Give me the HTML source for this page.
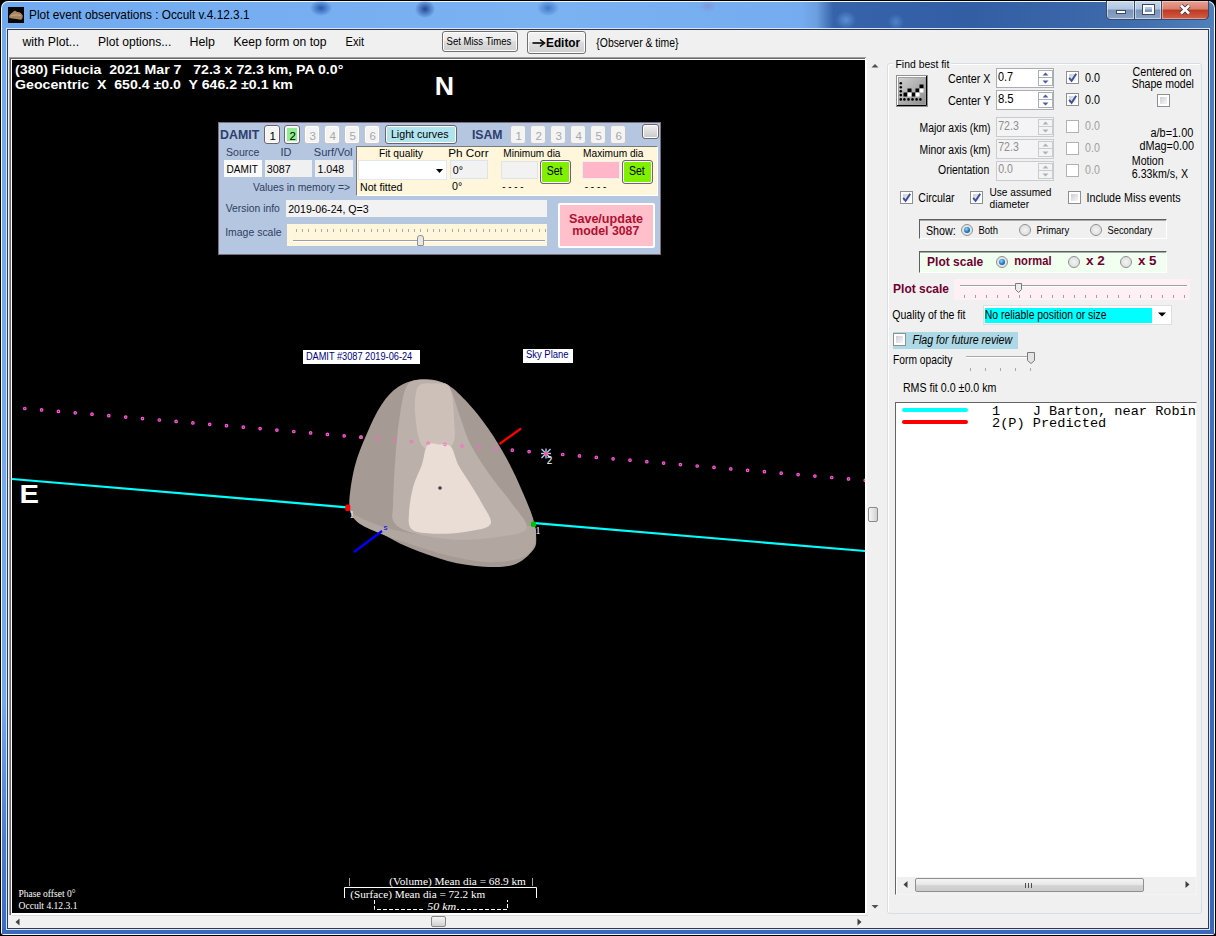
<!DOCTYPE html>
<html><head><meta charset="utf-8"><style>
*{box-sizing:border-box;margin:0;padding:0}
html,body{width:1216px;height:936px;overflow:hidden;background:#000;font-family:"Liberation Sans",sans-serif;font-size:12px;color:#000;position:relative}
.a{position:absolute}
.btn{position:absolute;border:1px solid #707070;border-radius:3px;background:linear-gradient(180deg,#f2f2f2 0,#ebebeb 45%,#dddddd 50%,#cfcfcf 100%);box-shadow:inset 0 0 0 1px #fcfcfc}
.cb{position:absolute;width:13px;height:13px;border:1px solid #8e8f8f;background:#fff}
.cb i{position:absolute;left:2px;top:2px;width:7px;height:7px;background:linear-gradient(135deg,#cbcfd5,#f6f6f6)}
.cbd{position:absolute;width:13px;height:13px;border:1px solid #b1b1b1;background:#fff}
.rb{position:absolute;width:12px;height:12px;border-radius:50%;border:1px solid #8e8f8f;background:radial-gradient(circle at 50% 50%,#f4f4f4 0,#e2e2e2 60%,#f8f8f8 100%)}
.tb{position:absolute;border:1px solid #abadb3;background:#fff}
.tbd{position:absolute;border:1px solid #c8cbd0;background:#f4f4f4}
</style></head><body>
<div class="a" style="left:0px;top:0px;width:1216px;height:936px;background:#000"></div>
<div class="a" style="left:1px;top:1px;width:1214px;height:934px;border-radius:7px 7px 3px 3px;background:#f4f8fc"></div>
<div class="a" style="left:2px;top:2px;width:1212px;height:932px;border-radius:6px 6px 2px 2px;background:linear-gradient(90deg,#72aaf0 0,#7ab2f2 45%,#74acef 66%,#6c9fe0 67.2%,#3663aa 68.6%,#325ea4 80%,#3d6aaa 92%,#5080bc 100%)"></div>
<div class="a" style="left:2px;top:700px;width:6px;height:234px;background:linear-gradient(180deg,rgba(80,130,215,0),#4a7cd0 60%,#3b6cc4)"></div>
<div class="a" style="left:1208px;top:200px;width:6px;height:734px;background:linear-gradient(180deg,rgba(60,100,180,0),#3d6cc0 40%,#3a66b8)"></div>
<div class="a" style="left:2px;top:928px;width:1212px;height:6px;background:#3b68bc;border-radius:0 0 2px 2px"></div>
<div class="a" style="left:310px;top:0px;width:22px;height:16px;border-radius:50%;background:radial-gradient(ellipse at center,rgba(25,75,160,.85) 0,rgba(0,0,0,0) 72%)"></div>
<div class="a" style="left:415px;top:0px;width:20px;height:18px;border-radius:50%;background:radial-gradient(ellipse at center,rgba(20,55,130,.85) 0,rgba(0,0,0,0) 72%)"></div>
<div class="a" style="left:537px;top:0px;width:22px;height:16px;border-radius:50%;background:radial-gradient(ellipse at center,rgba(40,95,180,.7) 0,rgba(0,0,0,0) 72%)"></div>
<div class="a" style="left:700px;top:0px;width:16px;height:12px;border-radius:50%;background:radial-gradient(ellipse at center,rgba(150,100,170,.3) 0,rgba(0,0,0,0) 72%)"></div>
<div class="a" style="left:836px;top:11px;width:20px;height:18px;border-radius:50%;background:radial-gradient(ellipse at center,rgba(120,180,245,.55) 0,rgba(0,0,0,0) 72%)"></div>
<div class="a" style="left:888px;top:14px;width:16px;height:16px;border-radius:50%;background:radial-gradient(ellipse at center,rgba(120,180,245,.4) 0,rgba(0,0,0,0) 72%)"></div>
<div class="a" style="left:7px;top:29px;width:1202px;height:900px;border:1px solid #2b3b55;background:#f0f0f0"></div>
<div class="a" style="left:6px;top:28px;width:1204px;height:902px;border:1px solid #d8e6f8;background:transparent"></div>
<div class="a" style="left:8px;top:30px;width:1200px;height:898px;background:#f0f0f0"></div>
<svg class="a" style="left:8px;top:7px" width="16" height="16"><rect width="16" height="16" fill="#060606"/><path d="M1,10 C1,7.5 3.5,6 5.5,4.5 C6.5,3 8,4 9,5 C11,4.5 13,5.5 14.5,8 C15.2,10 14.2,12.8 12.5,12.8 C10,12.2 7,11.8 4,11.5 C2,11.3 1,11 1,10 Z" fill="#a48462"/><path d="M3,9 C5,8 9,7.5 13,8.5" stroke="#c8a478" stroke-width="1.2" fill="none"/></svg>
<div class="a" style="left:1106px;top:1px;width:103px;height:19px;border:1px solid #3a4a6a;border-top:none;border-radius:0 0 5px 5px;overflow:hidden;background:#000">
<div class="a" style="left:0;top:0;width:28px;height:18px;background:linear-gradient(180deg,#c8d8ec 0,#aec4e0 45%,#7a94b8 50%,#8aa4c8 100%);border-right:1px solid #3a4a6a;box-shadow:inset 0 0 0 1px rgba(255,255,255,.5)"></div>
<div class="a" style="left:28px;top:0;width:27px;height:18px;background:linear-gradient(180deg,#c8d8ec 0,#aec4e0 45%,#7a94b8 50%,#8aa4c8 100%);border-right:1px solid #3a4a6a;box-shadow:inset 0 0 0 1px rgba(255,255,255,.5)"></div>
<div class="a" style="left:55px;top:0;width:47px;height:18px;background:linear-gradient(180deg,#e8a090 0,#d88070 45%,#c03820 50%,#d06048 100%);box-shadow:inset 0 0 0 1px rgba(255,255,255,.4)"></div>
</div>
<div class="a" style="left:1116px;top:10px;width:10px;height:4px;background:#fff;border:1px solid #404860"></div>
<div class="a" style="left:1143px;top:5px;width:11px;height:9px;border:2px solid #fff;outline:1px solid #404860;background:transparent"></div>
<svg class="a" style="left:1177px;top:3px" width="16" height="14"><path d="M4,2.5 L12,10.5 M12,2.5 L4,10.5" stroke="#303848" stroke-width="4.4"/><path d="M4,2.5 L12,10.5 M12,2.5 L4,10.5" stroke="#fff" stroke-width="2.7"/></svg>
<div class="btn" style="left:442px;top:31px;width:76px;height:21px"></div>
<div class="btn" style="left:527px;top:31px;width:59px;height:23px"></div>
<svg class="a" style="left:532px;top:38px" width="14" height="10"><path d="M0.5,5 L11,5" stroke="#000" stroke-width="1.6"/><path d="M8,1.5 L12.5,5 L8,8.5" stroke="#000" stroke-width="1.5" fill="none"/></svg>
<div class="a" style="left:9px;top:57px;width:857px;height:858px;background:#fff;border-top:1px solid #a0a0a0;border-left:1px solid #a0a0a0"></div>
<div class="a" style="left:10px;top:58px;width:855px;height:857px;background:#fff;border-top:1px solid #696969;border-left:1px solid #696969"></div>
<div class="a" style="left:12px;top:60px;width:853px;height:853px;background:#000"></div>
<div class="a" style="left:866px;top:60px;width:16px;height:853px;background:#f0f0f0;border-left:1px solid #fff"></div>
<div class="a" style="left:12px;top:915px;width:856px;height:13px;background:#f0f0f0;border-top:1px solid #dadada"></div>
<svg class="a" style="left:870px;top:62px" width="10" height="8"><path d="M1.5,5.5 L5,2 L8.5,5.5 Z" fill="#505050"/></svg>
<svg class="a" style="left:870px;top:903px" width="10" height="8"><path d="M1.5,2 L5,5.5 L8.5,2 Z" fill="#505050"/></svg>
<svg class="a" style="left:14px;top:918px" width="8" height="10"><path d="M5.5,0.5 L1.5,4 L5.5,7.5 Z" fill="#404040"/></svg>
<svg class="a" style="left:856px;top:918px" width="8" height="10"><path d="M1.5,0.5 L5.5,4 L1.5,7.5 Z" fill="#404040"/></svg>
<div class="a" style="left:868px;top:507px;width:10px;height:15px;border:1px solid #8a8a8a;border-radius:2px;background:linear-gradient(90deg,#f4f4f4 0,#e4e4e4 50%,#d0d0d0 100%)"></div>
<div class="a" style="left:431px;top:916px;width:15px;height:11px;border:1px solid #8a8a8a;border-radius:2px;background:linear-gradient(180deg,#f4f4f4 0,#e4e4e4 50%,#d0d0d0 100%)"></div>
<svg class="a" style="left:0;top:0" width="1216" height="936" viewBox="0 0 1216 936">
<defs><clipPath id="pc"><rect x="12" y="60" width="853" height="853"/></clipPath></defs>
<g clip-path="url(#pc)">
<line x1="12" y1="479" x2="347" y2="507.3" stroke="#00ffff" stroke-width="2.2"/>
<line x1="535" y1="523.2" x2="866" y2="551.1" stroke="#00ffff" stroke-width="2.2"/>
<g fill="#702050" stroke="#ff55dd" stroke-width="1.2"><circle cx="24.8" cy="408.5" r="1.25"/><circle cx="41.6" cy="409.9" r="1.25"/><circle cx="58.4" cy="411.4" r="1.25"/><circle cx="75.2" cy="412.8" r="1.25"/><circle cx="92.0" cy="414.2" r="1.25"/><circle cx="108.8" cy="415.7" r="1.25"/><circle cx="125.7" cy="417.1" r="1.25"/><circle cx="142.5" cy="418.6" r="1.25"/><circle cx="159.3" cy="420.0" r="1.25"/><circle cx="176.1" cy="421.4" r="1.25"/><circle cx="192.9" cy="422.9" r="1.25"/><circle cx="209.7" cy="424.3" r="1.25"/><circle cx="226.5" cy="425.7" r="1.25"/><circle cx="243.3" cy="427.2" r="1.25"/><circle cx="260.1" cy="428.6" r="1.25"/><circle cx="276.9" cy="430.1" r="1.25"/><circle cx="293.8" cy="431.5" r="1.25"/><circle cx="310.6" cy="432.9" r="1.25"/><circle cx="327.4" cy="434.4" r="1.25"/><circle cx="344.2" cy="435.8" r="1.25"/><circle cx="361.0" cy="437.2" r="1.25"/><circle cx="377.8" cy="438.7" r="1.25"/><circle cx="394.6" cy="440.1" r="1.25"/><circle cx="411.4" cy="441.6" r="1.25"/><circle cx="428.2" cy="443.0" r="1.25"/><circle cx="445.0" cy="444.4" r="1.25"/><circle cx="461.9" cy="445.9" r="1.25"/><circle cx="478.7" cy="447.3" r="1.25"/><circle cx="495.5" cy="448.7" r="1.25"/><circle cx="512.3" cy="450.2" r="1.25"/><circle cx="529.1" cy="451.6" r="1.25"/><circle cx="562.7" cy="454.5" r="1.25"/><circle cx="579.5" cy="455.9" r="1.25"/><circle cx="596.3" cy="457.4" r="1.25"/><circle cx="613.1" cy="458.8" r="1.25"/><circle cx="630.0" cy="460.2" r="1.25"/><circle cx="646.8" cy="461.7" r="1.25"/><circle cx="663.6" cy="463.1" r="1.25"/><circle cx="680.4" cy="464.6" r="1.25"/><circle cx="697.2" cy="466.0" r="1.25"/><circle cx="714.0" cy="467.4" r="1.25"/><circle cx="730.8" cy="468.9" r="1.25"/><circle cx="747.6" cy="470.3" r="1.25"/><circle cx="764.4" cy="471.7" r="1.25"/><circle cx="781.2" cy="473.2" r="1.25"/><circle cx="798.1" cy="474.6" r="1.25"/><circle cx="814.9" cy="476.1" r="1.25"/><circle cx="831.7" cy="477.5" r="1.25"/><circle cx="848.5" cy="478.9" r="1.25"/><circle cx="865.3" cy="480.4" r="1.25"/></g>
<path d="M421.9,379.3 C414.1,379.8 405.2,382.5 398.4,386.8 C391.7,391.0 386.7,396.9 381.3,404.9 C376.0,412.9 370.8,424.5 366.4,434.8 C361.9,445.2 357.5,455.5 354.6,466.9 C351.8,478.3 349.3,494.8 349.3,503.2 C349.3,511.6 350.0,512.5 354.6,517.1 C359.2,521.7 368.0,525.9 377.1,531.0 C386.1,536.1 397.4,542.7 409.1,547.6 C420.9,552.6 435.1,557.7 447.6,560.9 C460.0,564.1 472.8,566.0 483.9,566.7 C494.9,567.3 505.6,567.5 513.8,564.7 C522.0,562.0 529.3,554.8 533.0,550.2 C536.8,545.7 536.2,542.7 536.2,537.4 C536.2,532.1 535.4,526.0 533.0,518.2 C530.6,510.3 526.3,500.4 521.9,490.4 C517.5,480.4 512.2,468.7 506.5,458.3 C500.9,448.0 495.0,438.0 488.2,428.4 C481.4,418.8 472.8,408.1 465.7,400.6 C458.6,393.2 452.7,387.1 445.4,383.5 C438.1,380.0 429.8,378.7 421.9,379.3 Z" fill="#a69a94"/>
<path d="M352.0,514.0 C353.7,513.7 362.8,519.3 370.0,522.0 C377.2,524.7 385.0,527.7 395.0,530.0 C405.0,532.3 417.5,534.8 430.0,536.0 C442.5,537.2 457.5,537.3 470.0,537.0 C482.5,536.7 494.5,535.8 505.0,534.0 C515.5,532.2 528.0,524.7 533.0,526.0 C538.0,527.3 535.7,537.5 535.0,542.0 C534.3,546.5 532.5,550.0 529.0,553.0 C525.5,556.0 521.2,558.5 514.0,560.0 C506.8,561.5 496.7,562.7 486.0,562.0 C475.3,561.3 461.7,558.7 450.0,556.0 C438.3,553.3 427.0,549.5 416.0,546.0 C405.0,542.5 393.3,538.7 384.0,535.0 C374.7,531.3 365.3,527.5 360.0,524.0 C354.7,520.5 350.3,514.3 352.0,514.0 Z" fill="#b2a6a0"/>
<path d="M407.0,385.7 C403.2,392.0 401.4,405.3 399.5,417.7 C397.5,430.2 396.3,446.2 395.2,460.5 C394.1,474.7 393.3,492.9 393.1,503.2 C392.9,513.5 390.8,517.5 394.1,522.4 C397.5,527.4 403.8,530.3 413.4,533.1 C423.0,536.0 438.3,538.8 451.8,539.5 C465.4,540.2 482.1,539.2 494.6,537.4 C507.0,535.6 523.8,534.5 526.6,528.8 C529.5,523.1 517.7,512.1 511.7,503.2 C505.6,494.3 497.1,485.0 490.3,475.4 C483.5,465.8 476.1,455.1 471.1,445.5 C466.1,435.9 463.6,426.6 460.4,417.7 C457.2,408.8 454.3,397.8 451.8,392.1 C449.3,386.4 450.4,385.6 445.4,383.5 C440.4,381.5 428.3,379.3 421.9,379.7 C415.5,380.1 410.7,379.3 407.0,385.7 Z" fill="#bcb0aa"/>
<path d="M417.6,387.4 C414.4,393.1 414.4,407.7 415.5,417.7 C416.6,427.8 418.0,443.0 424.1,447.6 C430.1,452.3 446.9,450.5 451.8,445.5 C456.8,440.5 454.3,427.4 454.0,417.7 C453.6,408.1 452.9,393.5 449.7,387.8 C446.5,382.1 440.1,383.6 434.7,383.5 C429.4,383.5 420.9,381.7 417.6,387.4 Z" fill="#ccc0b9"/>
<path d="M427.3,445.5 C424.4,448.9 424.2,458.0 421.9,464.7 C419.6,471.5 415.5,478.3 413.4,486.1 C411.2,493.9 409.5,504.6 409.1,511.8 C408.7,518.9 407.7,525.2 411.2,528.8 C414.8,532.5 421.9,533.0 430.5,533.5 C439.0,534.1 452.5,533.8 462.5,532.3 C472.5,530.8 487.1,529.4 490.3,524.6 C493.5,519.7 485.3,510.3 481.8,503.2 C478.2,496.1 472.8,488.2 468.9,481.8 C465.0,475.4 461.3,470.6 458.2,464.7 C455.2,458.9 454.0,450.0 450.8,446.6 C447.6,443.2 442.9,444.6 439.0,444.4 C435.1,444.3 430.1,442.1 427.3,445.5 Z" fill="#eaddd6"/>
<g fill="none" stroke="#ff66cc" stroke-width="1.2" opacity="0.75"><circle cx="361.0" cy="437.2" r="1.25"/><circle cx="377.8" cy="438.7" r="1.25"/><circle cx="394.6" cy="440.1" r="1.25"/><circle cx="411.4" cy="441.6" r="1.25"/><circle cx="428.2" cy="443.0" r="1.25"/><circle cx="445.0" cy="444.4" r="1.25"/><circle cx="461.9" cy="445.9" r="1.25"/><circle cx="478.7" cy="447.3" r="1.25"/><circle cx="495.5" cy="448.7" r="1.25"/></g>
<circle cx="440" cy="488" r="1.8" fill="#404040"/>
<line x1="499.5" y1="444" x2="521" y2="428.5" stroke="#ff0000" stroke-width="2.2"/>
<line x1="354" y1="552" x2="382" y2="531" stroke="#0000ff" stroke-width="2.2"/>
<rect x="345.3" y="504.6" width="5" height="6.4" rx="1.5" fill="#ff0000"/>
<rect x="531" y="521.4" width="5" height="5.6" rx="1.5" fill="#00c000"/>
<g stroke="#b0c8f0" stroke-width="1.4"><line x1="541.5" y1="449" x2="550.5" y2="458"/><line x1="550.5" y1="449" x2="541.5" y2="458"/><line x1="546" y1="448.5" x2="546" y2="458.5"/><line x1="541" y1="453.5" x2="551" y2="453.5"/></g>
<circle cx="546" cy="453.4" r="2" fill="#ff5599"/>
<g stroke="#a0a0a0" stroke-width="1"><line x1="349.5" y1="878" x2="349.5" y2="886"/><line x1="532.5" y1="878" x2="532.5" y2="886"/></g>
<polyline points="344.5,898 344.5,887.5 536.5,887.5 536.5,898" stroke="#fff" stroke-width="1" fill="none"/>
<polyline points="374.5,900 374.5,909.5 507.5,909.5 507.5,900" stroke="#fff" stroke-width="1" fill="none" stroke-dasharray="4,2"/>
<rect x="424" y="903" width="33" height="9" fill="#000"/>
</g></svg>
<div class="a" style="left:303px;top:350px;width:117px;height:14px;background:#fff"></div>
<div class="a" style="left:523px;top:349px;width:50px;height:14px;background:#fff"></div>
<div class="a" style="left:218px;top:122px;width:443px;height:133px;background:#b4c6e0;border:1px solid #7c6e80"></div>
<div class="a" style="left:264px;top:125px;width:16px;height:19px;border:1px solid #6e6470;border-radius:3px;background:#f4f4f4;box-shadow:inset 0 0 0 1px #fff"></div>
<div class="a" style="left:284px;top:125px;width:16px;height:19px;border:1px solid #6e6470;border-radius:3px;background:#f4f4f4;box-shadow:inset 0 0 0 1px #fff"><div class="a" style="left:2px;top:2px;width:10px;height:13px;background:#90ee90"></div></div>
<div class="a" style="left:304px;top:125px;width:16px;height:19px;border:1px solid #c4c4c8;border-radius:3px;background:#f4f4f4;box-shadow:inset 0 0 0 1px #fff"></div>
<div class="a" style="left:324px;top:125px;width:16px;height:19px;border:1px solid #c4c4c8;border-radius:3px;background:#f4f4f4;box-shadow:inset 0 0 0 1px #fff"></div>
<div class="a" style="left:344px;top:125px;width:16px;height:19px;border:1px solid #c4c4c8;border-radius:3px;background:#f4f4f4;box-shadow:inset 0 0 0 1px #fff"></div>
<div class="a" style="left:364px;top:125px;width:16px;height:19px;border:1px solid #c4c4c8;border-radius:3px;background:#f4f4f4;box-shadow:inset 0 0 0 1px #fff"></div>
<div class="a" style="left:385px;top:125px;width:72px;height:19px;border:1px solid #6e6470;border-radius:3px;background:#b0e4ee;box-shadow:inset 0 0 0 1px #fff"></div>
<div class="a" style="left:510px;top:125px;width:16px;height:19px;border:1px solid #c4c4c8;border-radius:3px;background:#f4f4f4"></div>
<div class="a" style="left:530px;top:125px;width:16px;height:19px;border:1px solid #c4c4c8;border-radius:3px;background:#f4f4f4"></div>
<div class="a" style="left:550px;top:125px;width:16px;height:19px;border:1px solid #c4c4c8;border-radius:3px;background:#f4f4f4"></div>
<div class="a" style="left:570px;top:125px;width:16px;height:19px;border:1px solid #c4c4c8;border-radius:3px;background:#f4f4f4"></div>
<div class="a" style="left:590px;top:125px;width:16px;height:19px;border:1px solid #c4c4c8;border-radius:3px;background:#f4f4f4"></div>
<div class="a" style="left:610px;top:125px;width:16px;height:19px;border:1px solid #c4c4c8;border-radius:3px;background:#f4f4f4"></div>
<div class="a" style="left:642px;top:124px;width:17px;height:15px;border:1px solid #6e6470;border-radius:3px;background:linear-gradient(#f0f0f0,#c8c8c8);box-shadow:inset 0 0 0 1px #fff"></div>
<div class="a" style="left:224px;top:160px;width:38px;height:17px;background:#fafafa"></div>
<div class="a" style="left:265px;top:160px;width:47px;height:17px;background:#f0f0f0"></div>
<div class="a" style="left:315px;top:160px;width:38px;height:17px;background:#f0f0f0"></div>
<div class="a" style="left:356px;top:146px;width:302px;height:50px;background:#fff6dc;border-left:1px solid #7a7a7a;border-top:1px solid #7a7a7a;border-right:1px solid #fff;border-bottom:1px solid #fff"></div>
<div class="a" style="left:358px;top:160px;width:89px;height:20px;background:#fff;border:1px solid #e4e8f0"></div>
<svg class="a" style="left:436px;top:169px" width="8" height="5"><path d="M0,0 L7,0 L3.5,4 Z" fill="#000"/></svg>
<div class="a" style="left:450px;top:160px;width:38px;height:19px;background:#f2f2f2;border:1px solid #dde4ee"></div>
<div class="a" style="left:501px;top:161px;width:37px;height:18px;background:#f2f2f2;border:1px solid #dde4ee"></div>
<div class="a" style="left:540px;top:160px;width:31px;height:24px;border:1px solid #6e6470;border-radius:3px;background:#80f000;box-shadow:inset 0 0 0 1px #fff"></div>
<div class="a" style="left:582px;top:161px;width:38px;height:18px;background:#ffb6c8;border:1px solid #f0f0f0"></div>
<div class="a" style="left:622px;top:160px;width:31px;height:24px;border:1px solid #6e6470;border-radius:3px;background:#80f000;box-shadow:inset 0 0 0 1px #fff"></div>
<div class="a" style="left:286px;top:200px;width:261px;height:17px;background:#f2f2f2"></div>
<div class="a" style="left:287px;top:224px;width:260px;height:22px;background:#fff6dc"></div>
<div class="a" style="left:296px;top:229px;width:1px;height:3px;background:#a8a8a8"></div>
<div class="a" style="left:302px;top:229px;width:1px;height:3px;background:#a8a8a8"></div>
<div class="a" style="left:308px;top:229px;width:1px;height:3px;background:#a8a8a8"></div>
<div class="a" style="left:315px;top:229px;width:1px;height:3px;background:#a8a8a8"></div>
<div class="a" style="left:321px;top:229px;width:1px;height:3px;background:#a8a8a8"></div>
<div class="a" style="left:327px;top:229px;width:1px;height:3px;background:#a8a8a8"></div>
<div class="a" style="left:333px;top:229px;width:1px;height:3px;background:#a8a8a8"></div>
<div class="a" style="left:340px;top:229px;width:1px;height:3px;background:#a8a8a8"></div>
<div class="a" style="left:346px;top:229px;width:1px;height:3px;background:#a8a8a8"></div>
<div class="a" style="left:352px;top:229px;width:1px;height:3px;background:#a8a8a8"></div>
<div class="a" style="left:358px;top:229px;width:1px;height:3px;background:#a8a8a8"></div>
<div class="a" style="left:364px;top:229px;width:1px;height:3px;background:#a8a8a8"></div>
<div class="a" style="left:371px;top:229px;width:1px;height:3px;background:#a8a8a8"></div>
<div class="a" style="left:377px;top:229px;width:1px;height:3px;background:#a8a8a8"></div>
<div class="a" style="left:383px;top:229px;width:1px;height:3px;background:#a8a8a8"></div>
<div class="a" style="left:389px;top:229px;width:1px;height:3px;background:#a8a8a8"></div>
<div class="a" style="left:396px;top:229px;width:1px;height:3px;background:#a8a8a8"></div>
<div class="a" style="left:402px;top:229px;width:1px;height:3px;background:#a8a8a8"></div>
<div class="a" style="left:408px;top:229px;width:1px;height:3px;background:#a8a8a8"></div>
<div class="a" style="left:414px;top:229px;width:1px;height:3px;background:#a8a8a8"></div>
<div class="a" style="left:420px;top:229px;width:1px;height:3px;background:#a8a8a8"></div>
<div class="a" style="left:427px;top:229px;width:1px;height:3px;background:#a8a8a8"></div>
<div class="a" style="left:433px;top:229px;width:1px;height:3px;background:#a8a8a8"></div>
<div class="a" style="left:439px;top:229px;width:1px;height:3px;background:#a8a8a8"></div>
<div class="a" style="left:445px;top:229px;width:1px;height:3px;background:#a8a8a8"></div>
<div class="a" style="left:452px;top:229px;width:1px;height:3px;background:#a8a8a8"></div>
<div class="a" style="left:458px;top:229px;width:1px;height:3px;background:#a8a8a8"></div>
<div class="a" style="left:464px;top:229px;width:1px;height:3px;background:#a8a8a8"></div>
<div class="a" style="left:470px;top:229px;width:1px;height:3px;background:#a8a8a8"></div>
<div class="a" style="left:476px;top:229px;width:1px;height:3px;background:#a8a8a8"></div>
<div class="a" style="left:483px;top:229px;width:1px;height:3px;background:#a8a8a8"></div>
<div class="a" style="left:489px;top:229px;width:1px;height:3px;background:#a8a8a8"></div>
<div class="a" style="left:495px;top:229px;width:1px;height:3px;background:#a8a8a8"></div>
<div class="a" style="left:501px;top:229px;width:1px;height:3px;background:#a8a8a8"></div>
<div class="a" style="left:507px;top:229px;width:1px;height:3px;background:#a8a8a8"></div>
<div class="a" style="left:514px;top:229px;width:1px;height:3px;background:#a8a8a8"></div>
<div class="a" style="left:520px;top:229px;width:1px;height:3px;background:#a8a8a8"></div>
<div class="a" style="left:526px;top:229px;width:1px;height:3px;background:#a8a8a8"></div>
<div class="a" style="left:532px;top:229px;width:1px;height:3px;background:#a8a8a8"></div>
<div class="a" style="left:539px;top:229px;width:1px;height:3px;background:#a8a8a8"></div>
<div class="a" style="left:545px;top:229px;width:1px;height:3px;background:#a8a8a8"></div>
<div class="a" style="left:293px;top:240px;width:252px;height:2px;border-top:1px solid #a0a0a0;border-bottom:1px solid #fff"></div>
<div class="a" style="left:417px;top:235px;width:7px;height:11px;background:#e8e8e8;border:1px solid #909090;border-radius:3px 3px 1px 1px"></div>
<div class="a" style="left:558px;top:203px;width:97px;height:45px;background:#ffc0cc;border:2px solid #fff;border-radius:2px"></div>
<div class="a" style="left:887px;top:63px;width:315px;height:851px;border:1px solid #d5dfe5;border-radius:3px;box-shadow:inset 1px 1px 0 #fff"></div>
<div class="a" style="left:893px;top:58px;width:58px;height:12px;background:#f0f0f0"></div>
<svg class="a" style="left:896px;top:75px" width="32" height="32">
<rect x="0.5" y="0.5" width="31" height="31" fill="#a0a0a0" stroke="#909090"/>
<rect x="1.5" y="1.5" width="29" height="29" fill="none" stroke="#fff"/>
<path d="M30.5,1 L30.5,30.5 L1,30.5" stroke="#000" fill="none"/>
<defs><linearGradient id="ig" x1="0" y1="0" x2="1" y2="1"><stop offset="0" stop-color="#cfcfcf"/><stop offset="1" stop-color="#909090"/></linearGradient></defs>
<rect x="3" y="3" width="26" height="26" fill="url(#ig)"/>
<g fill="#000"><circle cx="4.8" cy="8.3" r="1.3"/><circle cx="4.8" cy="12.2" r="1.3"/><circle cx="4.8" cy="16.2" r="1.3"/><circle cx="4.8" cy="20.1" r="1.3"/><circle cx="4.8" cy="24.4" r="1.3"/>
<circle cx="8.4" cy="24.4" r="1.3"/><circle cx="12.5" cy="24.4" r="1.3"/><circle cx="16.5" cy="24.4" r="1.3"/><circle cx="20.6" cy="24.4" r="1.3"/><circle cx="24.4" cy="24.4" r="1.3"/>
<rect x="7.5" y="17.5" width="4" height="4"/><rect x="11.5" y="13.5" width="4" height="4"/><rect x="15.5" y="17.5" width="4" height="4"/><rect x="19.5" y="13.5" width="4" height="4"/><rect x="23.5" y="9.5" width="4" height="4"/></g>
<g fill="#fff"><rect x="11.5" y="17.5" width="4" height="4"/><rect x="19.5" y="17.5" width="4" height="4"/><rect x="23.5" y="13.5" width="4" height="4"/></g>
</svg>
<div class="tb" style="left:996px;top:68px;width:58px;height:20px"></div>
<div class="a" style="left:1038px;top:70px;width:15px;height:16px;border:1px solid #a8b0b8;background:#fff"></div>
<div class="a" style="left:1039px;top:77px;width:13px;height:1px;background:#a8b0b8"></div>
<svg class="a" style="left:1041px;top:71px" width="9" height="14"><path d="M1.5,4.5 L4.5,1.5 L7.5,4.5 Z M1.5,9.5 L7.5,9.5 L4.5,12.5 Z" fill="#4a5aa0"/></svg>
<div class="tb" style="left:996px;top:90px;width:58px;height:20px"></div>
<div class="a" style="left:1038px;top:92px;width:15px;height:16px;border:1px solid #a8b0b8;background:#fff"></div>
<div class="a" style="left:1039px;top:99px;width:13px;height:1px;background:#a8b0b8"></div>
<svg class="a" style="left:1041px;top:93px" width="9" height="14"><path d="M1.5,4.5 L4.5,1.5 L7.5,4.5 Z M1.5,9.5 L7.5,9.5 L4.5,12.5 Z" fill="#4a5aa0"/></svg>
<div class="tbd" style="left:996px;top:117px;width:58px;height:20px"></div>
<div class="a" style="left:1038px;top:119px;width:15px;height:16px;border:1px solid #c8ccd0;background:#f4f4f4"></div>
<div class="a" style="left:1039px;top:126px;width:13px;height:1px;background:#c8ccd0"></div>
<svg class="a" style="left:1041px;top:120px" width="9" height="14"><path d="M1.5,4.5 L4.5,1.5 L7.5,4.5 Z M1.5,9.5 L7.5,9.5 L4.5,12.5 Z" fill="#b0b0b8"/></svg>
<div class="tbd" style="left:996px;top:139px;width:58px;height:20px"></div>
<div class="a" style="left:1038px;top:141px;width:15px;height:16px;border:1px solid #c8ccd0;background:#f4f4f4"></div>
<div class="a" style="left:1039px;top:148px;width:13px;height:1px;background:#c8ccd0"></div>
<svg class="a" style="left:1041px;top:142px" width="9" height="14"><path d="M1.5,4.5 L4.5,1.5 L7.5,4.5 Z M1.5,9.5 L7.5,9.5 L4.5,12.5 Z" fill="#b0b0b8"/></svg>
<div class="tbd" style="left:996px;top:161px;width:58px;height:20px"></div>
<div class="a" style="left:1038px;top:163px;width:15px;height:16px;border:1px solid #c8ccd0;background:#f4f4f4"></div>
<div class="a" style="left:1039px;top:170px;width:13px;height:1px;background:#c8ccd0"></div>
<svg class="a" style="left:1041px;top:164px" width="9" height="14"><path d="M1.5,4.5 L4.5,1.5 L7.5,4.5 Z M1.5,9.5 L7.5,9.5 L4.5,12.5 Z" fill="#b0b0b8"/></svg>
<div class="cb" style="left:1066px;top:71px"><i></i></div>
<svg class="a" style="left:1066px;top:71px" width="13" height="13"><path d="M3.2,6.8 L5.6,9.8 L10.2,2.8" stroke="#3c50a0" stroke-width="1.9" fill="none"/></svg>
<div class="cb" style="left:1066px;top:93px"><i></i></div>
<svg class="a" style="left:1066px;top:93px" width="13" height="13"><path d="M3.2,6.8 L5.6,9.8 L10.2,2.8" stroke="#3c50a0" stroke-width="1.9" fill="none"/></svg>
<div class="cbd" style="left:1066px;top:120px"></div>
<div class="cbd" style="left:1066px;top:142px"></div>
<div class="cbd" style="left:1066px;top:164px"></div>
<div class="cb" style="left:1157px;top:94px"><i></i></div>
<div class="cb" style="left:900px;top:191px"><i></i></div>
<svg class="a" style="left:900px;top:191px" width="13" height="13"><path d="M3.2,6.8 L5.6,9.8 L10.2,2.8" stroke="#3c50a0" stroke-width="1.9" fill="none"/></svg>
<div class="cb" style="left:970px;top:191px"><i></i></div>
<svg class="a" style="left:970px;top:191px" width="13" height="13"><path d="M3.2,6.8 L5.6,9.8 L10.2,2.8" stroke="#3c50a0" stroke-width="1.9" fill="none"/></svg>
<div class="cb" style="left:1068px;top:191px"><i></i></div>
<div class="a" style="left:919px;top:219px;width:248px;height:20px;border-top:1px solid #5e5e5e;border-left:1px solid #5e5e5e;border-bottom:1px solid #fff;border-right:1px solid #fff;box-shadow:inset 0 1px 0 #a8a8a8;background:#f0f0f0"></div>
<div class="rb" style="left:961px;top:224px"></div>
<div class="a" style="left:964px;top:227px;width:6px;height:6px;border-radius:50%;background:radial-gradient(circle at 40% 35%,#8fd8ff 0,#1a78c0 55%,#0a3a78 100%)"></div>
<div class="rb" style="left:1019px;top:224px"></div>
<div class="rb" style="left:1090px;top:224px"></div>
<div class="a" style="left:919px;top:251px;width:248px;height:22px;border-top:1px solid #5e5e5e;border-left:1px solid #5e5e5e;border-bottom:1px solid #fff;border-right:1px solid #fff;box-shadow:inset 0 1px 0 #a8a8a8;background:#f0fff0"></div>
<div class="rb" style="left:996px;top:256px"></div>
<div class="a" style="left:999px;top:259px;width:6px;height:6px;border-radius:50%;background:radial-gradient(circle at 40% 35%,#8fd8ff 0,#1a78c0 55%,#0a3a78 100%)"></div>
<div class="rb" style="left:1068px;top:256px"></div>
<div class="rb" style="left:1120px;top:256px"></div>
<div class="a" style="left:954px;top:279px;width:236px;height:21px;background:#fff0f6"></div>
<div class="a" style="left:960px;top:285px;width:227px;height:2px;border-top:1px solid #a0a0a0;border-bottom:1px solid #fff"></div>
<div class="a" style="left:964px;top:295px;width:1px;height:3px;background:#a0a0a0"></div>
<div class="a" style="left:975px;top:295px;width:1px;height:3px;background:#a0a0a0"></div>
<div class="a" style="left:986px;top:295px;width:1px;height:3px;background:#a0a0a0"></div>
<div class="a" style="left:997px;top:295px;width:1px;height:3px;background:#a0a0a0"></div>
<div class="a" style="left:1008px;top:295px;width:1px;height:3px;background:#a0a0a0"></div>
<div class="a" style="left:1019px;top:295px;width:1px;height:3px;background:#a0a0a0"></div>
<div class="a" style="left:1030px;top:295px;width:1px;height:3px;background:#a0a0a0"></div>
<div class="a" style="left:1041px;top:295px;width:1px;height:3px;background:#a0a0a0"></div>
<div class="a" style="left:1052px;top:295px;width:1px;height:3px;background:#a0a0a0"></div>
<div class="a" style="left:1063px;top:295px;width:1px;height:3px;background:#a0a0a0"></div>
<div class="a" style="left:1074px;top:295px;width:1px;height:3px;background:#a0a0a0"></div>
<div class="a" style="left:1085px;top:295px;width:1px;height:3px;background:#a0a0a0"></div>
<div class="a" style="left:1096px;top:295px;width:1px;height:3px;background:#a0a0a0"></div>
<div class="a" style="left:1107px;top:295px;width:1px;height:3px;background:#a0a0a0"></div>
<div class="a" style="left:1118px;top:295px;width:1px;height:3px;background:#a0a0a0"></div>
<div class="a" style="left:1129px;top:295px;width:1px;height:3px;background:#a0a0a0"></div>
<div class="a" style="left:1140px;top:295px;width:1px;height:3px;background:#a0a0a0"></div>
<div class="a" style="left:1151px;top:295px;width:1px;height:3px;background:#a0a0a0"></div>
<div class="a" style="left:1162px;top:295px;width:1px;height:3px;background:#a0a0a0"></div>
<div class="a" style="left:1173px;top:295px;width:1px;height:3px;background:#a0a0a0"></div>
<div class="a" style="left:1184px;top:295px;width:1px;height:3px;background:#a0a0a0"></div>
<svg class="a" style="left:1014px;top:282px" width="9" height="12"><path d="M1.5,1.5 L7.5,1.5 L7.5,7.5 L4.5,10.5 L1.5,7.5 Z" fill="#ececec" stroke="#7a7a7a"/></svg>
<div class="a" style="left:983px;top:305px;width:189px;height:20px;background:#fff;border:1px solid #dedede"></div>
<div class="a" style="left:985px;top:308px;width:167px;height:15px;background:#00ffff"></div>
<svg class="a" style="left:1158px;top:312px" width="9" height="6"><path d="M0,0.5 L8,0.5 L4,4.5 Z" fill="#000"/></svg>
<div class="a" style="left:893px;top:332px;width:125px;height:17px;background:#add8e6"></div>
<div class="cb" style="left:893px;top:333px"><i></i></div>
<div class="a" style="left:966px;top:356px;width:69px;height:2px;border-top:1px solid #a8a8a8;border-bottom:1px solid #fff"></div>
<div class="a" style="left:970px;top:368px;width:1px;height:3px;background:#a8a8a8"></div>
<div class="a" style="left:985px;top:368px;width:1px;height:3px;background:#a8a8a8"></div>
<div class="a" style="left:1000px;top:368px;width:1px;height:3px;background:#a8a8a8"></div>
<div class="a" style="left:1015px;top:368px;width:1px;height:3px;background:#a8a8a8"></div>
<div class="a" style="left:1030px;top:368px;width:1px;height:3px;background:#a8a8a8"></div>
<svg class="a" style="left:1026px;top:351px" width="10" height="14"><path d="M1.5,1.5 L8.5,1.5 L8.5,9.5 L5,12.5 L1.5,9.5 Z" fill="#e4e4e4" stroke="#7a7a7a"/></svg>
<div class="a" style="left:895px;top:402px;width:302px;height:493px;background:#fff;border-top:1px solid #646464;border-left:1px solid #646464;border-right:1px solid #f4f4f4;border-bottom:1px solid #f4f4f4"></div>
<div class="a" style="left:902px;top:408px;width:66px;height:4px;background:#00ffff;border-radius:2px"></div>
<div class="a" style="left:902px;top:420px;width:66px;height:4px;background:#ff0000;border-radius:2px"></div>
<svg class="a" style="left:896px;top:403px" width="300" height="30"><g font-family="Liberation Mono" font-size="13.6" fill="#000"><text x="96" y="11.5" xml:space="preserve">1    J Barton, near Robin</text><text x="96" y="23.6" xml:space="preserve">2(P) Predicted</text></g></svg>
<div class="a" style="left:897px;top:877px;width:299px;height:17px;background:#f0f0f0"></div>
<svg class="a" style="left:902px;top:880px" width="8" height="10"><path d="M5.5,1 L1.5,4.5 L5.5,8 Z" fill="#404040"/></svg>
<svg class="a" style="left:1184px;top:880px" width="8" height="10"><path d="M1.5,1 L5.5,4.5 L1.5,8 Z" fill="#404040"/></svg>
<div class="a" style="left:915px;top:878px;width:229px;height:14px;border:1px solid #909090;border-radius:2px;background:linear-gradient(180deg,#f4f4f4 0,#e8e8e8 45%,#d4d4d4 55%,#cccccc 100%)"></div>
<div class="a" style="left:1025px;top:883px;width:1px;height:5px;background:#505050"></div>
<div class="a" style="left:1028px;top:883px;width:1px;height:5px;background:#505050"></div>
<div class="a" style="left:1031px;top:883px;width:1px;height:5px;background:#505050"></div>
<svg class="a" style="left:0;top:0" width="1216" height="936"><text x="29.1" y="19.0" font-family="Liberation Sans" font-size="12.2" fill="#000" textLength="220.4" lengthAdjust="spacingAndGlyphs"  xml:space="preserve">Plot event observations : Occult v.4.12.3.1</text><text x="22.5" y="45.8" font-family="Liberation Sans" font-size="12" fill="#000" textLength="56.6" lengthAdjust="spacingAndGlyphs"  xml:space="preserve">with Plot...</text><text x="98.0" y="45.8" font-family="Liberation Sans" font-size="12" fill="#000" textLength="73.3" lengthAdjust="spacingAndGlyphs"  xml:space="preserve">Plot options...</text><text x="189.5" y="45.8" font-family="Liberation Sans" font-size="12" fill="#000" textLength="25.5" lengthAdjust="spacingAndGlyphs"  xml:space="preserve">Help</text><text x="233.5" y="45.8" font-family="Liberation Sans" font-size="12" fill="#000" textLength="93.0" lengthAdjust="spacingAndGlyphs"  xml:space="preserve">Keep form on top</text><text x="345.5" y="45.8" font-family="Liberation Sans" font-size="12" fill="#000" textLength="18.5" lengthAdjust="spacingAndGlyphs"  xml:space="preserve">Exit</text><text x="446.5" y="45.1" font-family="Liberation Sans" font-size="10.5" fill="#000" textLength="64.8" lengthAdjust="spacingAndGlyphs"  xml:space="preserve">Set Miss Times</text><text x="546.0" y="47.2" font-family="Liberation Sans" font-size="12.2" fill="#000" font-weight="bold" textLength="34.2" lengthAdjust="spacingAndGlyphs"  xml:space="preserve">Editor</text><text x="596.3" y="47.2" font-family="Liberation Sans" font-size="12" fill="#000" textLength="82.2" lengthAdjust="spacingAndGlyphs"  xml:space="preserve">{Observer &amp; time}</text><text x="15.1" y="74.2" font-family="Liberation Sans" font-size="13.4" fill="#fff" font-weight="bold" textLength="328.2" lengthAdjust="spacingAndGlyphs"  xml:space="preserve">(380) Fiducia  2021 Mar 7   72.3 x 72.3 km, PA 0.0°</text><text x="15.1" y="89.3" font-family="Liberation Sans" font-size="13.4" fill="#fff" font-weight="bold" textLength="277.8" lengthAdjust="spacingAndGlyphs"  xml:space="preserve">Geocentric  X  650.4 ±0.0  Y 646.2 ±0.1 km</text><text x="434.7" y="95.0" font-family="Liberation Sans" font-size="25" fill="#fff" font-weight="bold" textLength="19.3" lengthAdjust="spacingAndGlyphs"  xml:space="preserve">N</text><text x="19.5" y="502.5" font-family="Liberation Sans" font-size="25" fill="#fff" font-weight="bold" textLength="19.5" lengthAdjust="spacingAndGlyphs"  xml:space="preserve">E</text><text x="305.9" y="359.8" font-family="Liberation Sans" font-size="10" fill="#000080" textLength="106.3" lengthAdjust="spacingAndGlyphs"  xml:space="preserve">DAMIT #3087 2019-06-24</text><text x="525.9" y="357.7" font-family="Liberation Sans" font-size="10" fill="#000080" textLength="42.7" lengthAdjust="spacingAndGlyphs"  xml:space="preserve">Sky Plane</text><text x="18.5" y="897.0" font-family="Liberation Serif" font-size="9.8" fill="#fff" textLength="57.0" lengthAdjust="spacingAndGlyphs"  xml:space="preserve">Phase offset 0°</text><text x="18.5" y="909.0" font-family="Liberation Serif" font-size="10.2" fill="#fff" textLength="59.0" lengthAdjust="spacingAndGlyphs"  xml:space="preserve">Occult 4.12.3.1</text><text x="389.2" y="884.6" font-family="Liberation Serif" font-size="11" fill="#fff" textLength="136.7" lengthAdjust="spacingAndGlyphs"  xml:space="preserve">(Volume) Mean dia = 68.9 km</text><text x="350.3" y="897.7" font-family="Liberation Serif" font-size="11" fill="#fff" textLength="134.9" lengthAdjust="spacingAndGlyphs"  xml:space="preserve">(Surface) Mean dia = 72.2 km</text><text x="427.2" y="910.3" font-family="Liberation Serif" font-size="10.8" fill="#fff" font-style="italic" textLength="29.0" lengthAdjust="spacingAndGlyphs"  xml:space="preserve">50 km</text><text x="349.3" y="517.8" font-family="Liberation Serif" font-size="10" fill="#fff"  xml:space="preserve">1</text><text x="535.4" y="533.8" font-family="Liberation Serif" font-size="10" fill="#fff"  xml:space="preserve">1</text><text x="546.7" y="464.0" font-family="Liberation Sans" font-size="10" fill="#fff"  xml:space="preserve">2</text><text x="383.4" y="529.6" font-family="Liberation Sans" font-size="8" fill="#0000ff"  xml:space="preserve">s</text><text x="220.1" y="139.3" font-family="Liberation Sans" font-size="12" fill="#2e3e6e" font-weight="bold" textLength="39.1" lengthAdjust="spacingAndGlyphs"  xml:space="preserve">DAMIT</text><text x="269.5" y="139.5" font-family="Liberation Sans" font-size="11.5" fill="#000"  xml:space="preserve">1</text><text x="289.5" y="139.5" font-family="Liberation Sans" font-size="11.5" fill="#000"  xml:space="preserve">2</text><text x="309.5" y="139.5" font-family="Liberation Sans" font-size="11.5" fill="#a8a8a8"  xml:space="preserve">3</text><text x="329.5" y="139.5" font-family="Liberation Sans" font-size="11.5" fill="#a8a8a8"  xml:space="preserve">4</text><text x="349.5" y="139.5" font-family="Liberation Sans" font-size="11.5" fill="#a8a8a8"  xml:space="preserve">5</text><text x="369.5" y="139.5" font-family="Liberation Sans" font-size="11.5" fill="#a8a8a8"  xml:space="preserve">6</text><text x="390.9" y="138.4" font-family="Liberation Sans" font-size="11.5" fill="#000" textLength="57.6" lengthAdjust="spacingAndGlyphs"  xml:space="preserve">Light curves</text><text x="471.9" y="139.3" font-family="Liberation Sans" font-size="12" fill="#2e3e6e" font-weight="bold" textLength="30.6" lengthAdjust="spacingAndGlyphs"  xml:space="preserve">ISAM</text><text x="515.5" y="139.5" font-family="Liberation Sans" font-size="11.5" fill="#a8a8a8"  xml:space="preserve">1</text><text x="535.5" y="139.5" font-family="Liberation Sans" font-size="11.5" fill="#a8a8a8"  xml:space="preserve">2</text><text x="555.5" y="139.5" font-family="Liberation Sans" font-size="11.5" fill="#a8a8a8"  xml:space="preserve">3</text><text x="575.5" y="139.5" font-family="Liberation Sans" font-size="11.5" fill="#a8a8a8"  xml:space="preserve">4</text><text x="595.5" y="139.5" font-family="Liberation Sans" font-size="11.5" fill="#a8a8a8"  xml:space="preserve">5</text><text x="615.5" y="139.5" font-family="Liberation Sans" font-size="11.5" fill="#a8a8a8"  xml:space="preserve">6</text><text x="226.0" y="155.5" font-family="Liberation Sans" font-size="11.5" fill="#2f4060" textLength="33.5" lengthAdjust="spacingAndGlyphs"  xml:space="preserve">Source</text><text x="280.5" y="155.5" font-family="Liberation Sans" font-size="11.5" fill="#2f4060" textLength="11.0" lengthAdjust="spacingAndGlyphs"  xml:space="preserve">ID</text><text x="313.8" y="155.5" font-family="Liberation Sans" font-size="11.5" fill="#2f4060" textLength="38.7" lengthAdjust="spacingAndGlyphs"  xml:space="preserve">Surf/Vol</text><text x="226.5" y="172.6" font-family="Liberation Sans" font-size="11.5" fill="#000" textLength="31.4" lengthAdjust="spacingAndGlyphs"  xml:space="preserve">DAMIT</text><text x="266.8" y="172.6" font-family="Liberation Sans" font-size="11.5" fill="#000" textLength="24.0" lengthAdjust="spacingAndGlyphs"  xml:space="preserve">3087</text><text x="317.5" y="172.6" font-family="Liberation Sans" font-size="11.5" fill="#000" textLength="26.6" lengthAdjust="spacingAndGlyphs"  xml:space="preserve">1.048</text><text x="253.0" y="191.0" font-family="Liberation Sans" font-size="11.5" fill="#2f4060" textLength="97.0" lengthAdjust="spacingAndGlyphs"  xml:space="preserve">Values in memory =&gt;</text><text x="379.1" y="156.6" font-family="Liberation Sans" font-size="11" fill="#000" textLength="43.8" lengthAdjust="spacingAndGlyphs"  xml:space="preserve">Fit quality</text><text x="448.2" y="156.6" font-family="Liberation Sans" font-size="11" fill="#000" textLength="40.5" lengthAdjust="spacingAndGlyphs"  xml:space="preserve">Ph Corr</text><text x="503.3" y="156.6" font-family="Liberation Sans" font-size="11" fill="#000" textLength="57.2" lengthAdjust="spacingAndGlyphs"  xml:space="preserve">Minimum dia</text><text x="583.1" y="157.1" font-family="Liberation Sans" font-size="11" fill="#000" textLength="60.4" lengthAdjust="spacingAndGlyphs"  xml:space="preserve">Maximum dia</text><text x="452.8" y="173.9" font-family="Liberation Sans" font-size="11.5" fill="#000" textLength="10.2" lengthAdjust="spacingAndGlyphs"  xml:space="preserve">0°</text><text x="360.0" y="191.0" font-family="Liberation Sans" font-size="11.5" fill="#000" textLength="42.5" lengthAdjust="spacingAndGlyphs"  xml:space="preserve">Not fitted</text><text x="452.1" y="189.7" font-family="Liberation Sans" font-size="11.5" fill="#000" textLength="10.2" lengthAdjust="spacingAndGlyphs"  xml:space="preserve">0°</text><text x="546.7" y="175.3" font-family="Liberation Sans" font-size="12" fill="#000" textLength="15.8" lengthAdjust="spacingAndGlyphs"  xml:space="preserve">Set</text><text x="502.2" y="190.0" font-family="Liberation Sans" font-size="11.5" fill="#000" textLength="21.3" lengthAdjust="spacingAndGlyphs"  xml:space="preserve">- - - -</text><text x="629.0" y="175.3" font-family="Liberation Sans" font-size="12" fill="#000" textLength="15.8" lengthAdjust="spacingAndGlyphs"  xml:space="preserve">Set</text><text x="584.7" y="190.0" font-family="Liberation Sans" font-size="11.5" fill="#000" textLength="21.7" lengthAdjust="spacingAndGlyphs"  xml:space="preserve">- - - -</text><text x="225.8" y="211.8" font-family="Liberation Sans" font-size="11.5" fill="#2f4060" textLength="54.0" lengthAdjust="spacingAndGlyphs"  xml:space="preserve">Version info</text><text x="288.2" y="212.7" font-family="Liberation Sans" font-size="11.5" fill="#000" textLength="80.5" lengthAdjust="spacingAndGlyphs"  xml:space="preserve">2019-06-24, Q=3</text><text x="225.2" y="236.3" font-family="Liberation Sans" font-size="11.5" fill="#2f4060" textLength="56.4" lengthAdjust="spacingAndGlyphs"  xml:space="preserve">Image scale</text><text x="569.0" y="222.5" font-family="Liberation Sans" font-size="12.6" fill="#b01030" font-weight="bold" textLength="74.1" lengthAdjust="spacingAndGlyphs"  xml:space="preserve">Save/update</text><text x="572.3" y="235.4" font-family="Liberation Sans" font-size="12.6" fill="#b01030" font-weight="bold" textLength="67.0" lengthAdjust="spacingAndGlyphs"  xml:space="preserve">model 3087</text><text x="895.5" y="67.5" font-family="Liberation Sans" font-size="11.8" fill="#000" textLength="53.8" lengthAdjust="spacingAndGlyphs"  xml:space="preserve">Find best fit</text><text x="948.1" y="82.8" font-family="Liberation Sans" font-size="13" fill="#000" textLength="42.4" lengthAdjust="spacingAndGlyphs"  xml:space="preserve">Center X</text><text x="947.9" y="104.8" font-family="Liberation Sans" font-size="13" fill="#000" textLength="42.9" lengthAdjust="spacingAndGlyphs"  xml:space="preserve">Center Y</text><text x="997.9" y="80.8" font-family="Liberation Sans" font-size="12.8" fill="#000" textLength="15.1" lengthAdjust="spacingAndGlyphs"  xml:space="preserve">0.7</text><text x="997.9" y="102.8" font-family="Liberation Sans" font-size="12.8" fill="#000" textLength="15.8" lengthAdjust="spacingAndGlyphs"  xml:space="preserve">8.5</text><text x="998.2" y="129.5" font-family="Liberation Sans" font-size="12.8" fill="#8d8d8d" textLength="20.6" lengthAdjust="spacingAndGlyphs"  xml:space="preserve">72.3</text><text x="998.2" y="151.2" font-family="Liberation Sans" font-size="12.8" fill="#8d8d8d" textLength="20.6" lengthAdjust="spacingAndGlyphs"  xml:space="preserve">72.3</text><text x="998.2" y="173.4" font-family="Liberation Sans" font-size="12.8" fill="#8d8d8d" textLength="14.7" lengthAdjust="spacingAndGlyphs"  xml:space="preserve">0.0</text><text x="1085.0" y="81.8" font-family="Liberation Sans" font-size="12.8" fill="#000" textLength="15.0" lengthAdjust="spacingAndGlyphs"  xml:space="preserve">0.0</text><text x="1085.0" y="103.6" font-family="Liberation Sans" font-size="12.8" fill="#000" textLength="15.0" lengthAdjust="spacingAndGlyphs"  xml:space="preserve">0.0</text><text x="1085.1" y="130.4" font-family="Liberation Sans" font-size="12.8" fill="#a0a0a0" textLength="14.8" lengthAdjust="spacingAndGlyphs"  xml:space="preserve">0.0</text><text x="1085.1" y="152.1" font-family="Liberation Sans" font-size="12.8" fill="#a0a0a0" textLength="14.8" lengthAdjust="spacingAndGlyphs"  xml:space="preserve">0.0</text><text x="1085.1" y="173.8" font-family="Liberation Sans" font-size="12.8" fill="#a0a0a0" textLength="14.8" lengthAdjust="spacingAndGlyphs"  xml:space="preserve">0.0</text><text x="1132.5" y="75.7" font-family="Liberation Sans" font-size="12" fill="#000" textLength="59.0" lengthAdjust="spacingAndGlyphs"  xml:space="preserve">Centered on</text><text x="1131.7" y="88.0" font-family="Liberation Sans" font-size="12" fill="#000" textLength="62.2" lengthAdjust="spacingAndGlyphs"  xml:space="preserve">Shape model</text><text x="919.5" y="131.5" font-family="Liberation Sans" font-size="12.5" fill="#000" textLength="71.0" lengthAdjust="spacingAndGlyphs"  xml:space="preserve">Major axis (km)</text><text x="919.5" y="153.5" font-family="Liberation Sans" font-size="12.5" fill="#000" textLength="71.0" lengthAdjust="spacingAndGlyphs"  xml:space="preserve">Minor axis (km)</text><text x="938.1" y="174.0" font-family="Liberation Sans" font-size="12.5" fill="#000" textLength="51.1" lengthAdjust="spacingAndGlyphs"  xml:space="preserve">Orientation</text><text x="1150.5" y="136.7" font-family="Liberation Sans" font-size="12" fill="#000" textLength="42.8" lengthAdjust="spacingAndGlyphs"  xml:space="preserve">a/b=1.00</text><text x="1139.5" y="149.5" font-family="Liberation Sans" font-size="12" fill="#000" textLength="54.5" lengthAdjust="spacingAndGlyphs"  xml:space="preserve">dMag=0.00</text><text x="1131.8" y="164.6" font-family="Liberation Sans" font-size="12" fill="#000" textLength="31.9" lengthAdjust="spacingAndGlyphs"  xml:space="preserve">Motion</text><text x="1131.8" y="178.4" font-family="Liberation Sans" font-size="12" fill="#000" textLength="56.3" lengthAdjust="spacingAndGlyphs"  xml:space="preserve">6.33km/s, X</text><text x="918.3" y="201.6" font-family="Liberation Sans" font-size="12.5" fill="#000" textLength="36.2" lengthAdjust="spacingAndGlyphs"  xml:space="preserve">Circular</text><text x="989.5" y="195.6" font-family="Liberation Sans" font-size="11.5" fill="#000" textLength="61.8" lengthAdjust="spacingAndGlyphs"  xml:space="preserve">Use assumed</text><text x="989.5" y="207.8" font-family="Liberation Sans" font-size="11.5" fill="#000" textLength="39.6" lengthAdjust="spacingAndGlyphs"  xml:space="preserve">diameter</text><text x="1086.5" y="201.5" font-family="Liberation Sans" font-size="12.5" fill="#000" textLength="94.0" lengthAdjust="spacingAndGlyphs"  xml:space="preserve">Include Miss events</text><text x="925.9" y="235.2" font-family="Liberation Sans" font-size="12" fill="#000" textLength="29.8" lengthAdjust="spacingAndGlyphs"  xml:space="preserve">Show:</text><text x="978.5" y="233.8" font-family="Liberation Sans" font-size="10.5" fill="#000" textLength="19.5" lengthAdjust="spacingAndGlyphs"  xml:space="preserve">Both</text><text x="1036.5" y="233.5" font-family="Liberation Sans" font-size="10.5" fill="#000" textLength="32.8" lengthAdjust="spacingAndGlyphs"  xml:space="preserve">Primary</text><text x="1107.5" y="233.5" font-family="Liberation Sans" font-size="10.5" fill="#000" textLength="44.7" lengthAdjust="spacingAndGlyphs"  xml:space="preserve">Secondary</text><text x="927.1" y="265.9" font-family="Liberation Sans" font-size="12.8" fill="#700030" font-weight="bold" textLength="56.1" lengthAdjust="spacingAndGlyphs"  xml:space="preserve">Plot scale</text><text x="1014.3" y="265.3" font-family="Liberation Sans" font-size="12.8" fill="#700030" font-weight="bold" textLength="37.2" lengthAdjust="spacingAndGlyphs"  xml:space="preserve">normal</text><text x="1086.1" y="265.3" font-family="Liberation Sans" font-size="12.8" fill="#700030" font-weight="bold" textLength="18.8" lengthAdjust="spacingAndGlyphs"  xml:space="preserve">x 2</text><text x="1137.9" y="265.3" font-family="Liberation Sans" font-size="12.8" fill="#700030" font-weight="bold" textLength="18.6" lengthAdjust="spacingAndGlyphs"  xml:space="preserve">x 5</text><text x="893.1" y="293.4" font-family="Liberation Sans" font-size="12.8" fill="#700030" font-weight="bold" textLength="55.9" lengthAdjust="spacingAndGlyphs"  xml:space="preserve">Plot scale</text><text x="892.3" y="319.4" font-family="Liberation Sans" font-size="12.2" fill="#000" textLength="73.2" lengthAdjust="spacingAndGlyphs"  xml:space="preserve">Quality of the fit</text><text x="984.8" y="319.0" font-family="Liberation Sans" font-size="12" fill="#000" textLength="121.7" lengthAdjust="spacingAndGlyphs"  xml:space="preserve">No reliable position or size</text><text x="912.5" y="344.0" font-family="Liberation Sans" font-size="12" fill="#000" font-style="italic" textLength="99.7" lengthAdjust="spacingAndGlyphs"  xml:space="preserve">Flag for future review</text><text x="893.1" y="364.0" font-family="Liberation Sans" font-size="12.2" fill="#000" textLength="59.2" lengthAdjust="spacingAndGlyphs"  xml:space="preserve">Form opacity</text><text x="902.9" y="392.3" font-family="Liberation Sans" font-size="12.2" fill="#000" textLength="93.5" lengthAdjust="spacingAndGlyphs"  xml:space="preserve">RMS fit 0.0 ±0.0 km</text></svg>
</body></html>
